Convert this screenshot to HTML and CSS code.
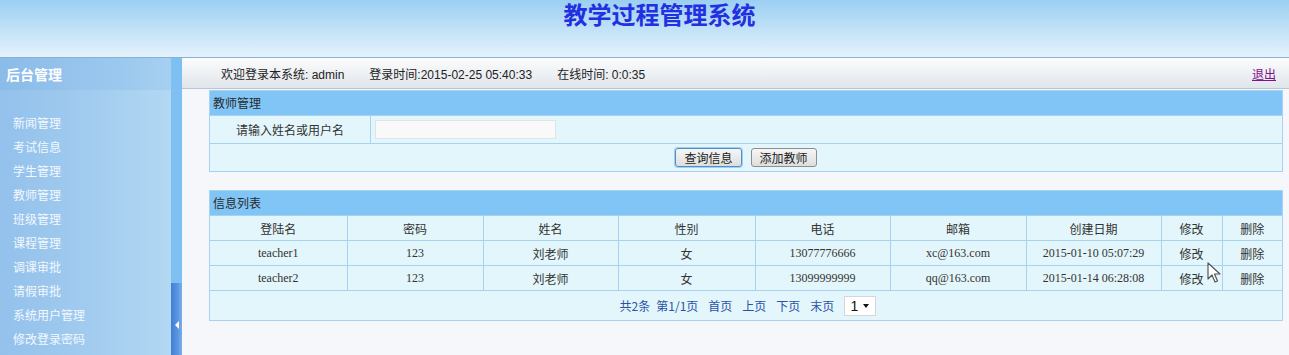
FILE: index.html
```html
<!DOCTYPE html>
<html>
<head>
  <meta charset="utf-8">
  <link rel="stylesheet" href="styles.css">
</head>
<body>
  <div class="header">
    <h1 class="title">教学过程管理系统</h1>
  </div>

  <div class="layout">
    <div class="sidebar">
      <div class="side-title">后台管理</div>
      <ul class="menu">
        <li>新闻管理</li>
        <li>考试信息</li>
        <li>学生管理</li>
        <li>教师管理</li>
        <li>班级管理</li>
        <li>课程管理</li>
        <li>调课审批</li>
        <li>请假审批</li>
        <li>系统用户管理</li>
        <li>修改登录密码</li>
      </ul>
    </div>

    <div class="splitter">
      <div class="split-top"></div>
      <div class="split-handle"><span class="arrow"></span></div>
    </div>

    <div class="main">
      <div class="topbar">
        <span class="info">欢迎登录本系统: admin</span>
        <span class="info">登录时间:2015-02-25 05:40:33</span>
        <span class="info">在线时间: 0:0:35</span>
        <a class="logout" href="#">退出</a>
      </div>

      <div class="content">
        <div class="panel">
          <div class="panel-head">教师管理</div>
          <div class="form-row">
            <div class="form-label">请输入姓名或用户名</div>
            <div class="form-field"><input class="text-input" type="text"></div>
          </div>
          <div class="form-row buttons">
            <button class="btn btn-focus">查询信息</button>
            <button class="btn">添加教师</button>
          </div>
        </div>

        <div class="panel list-panel">
          <div class="panel-head">信息列表</div>
          <table class="grid">
            <colgroup>
              <col style="width:137px"><col style="width:136px"><col style="width:135px">
              <col style="width:137px"><col style="width:135px"><col style="width:136px">
              <col style="width:135px"><col style="width:61px"><col style="width:60px">
            </colgroup>
            <thead>
              <tr>
                <th>登陆名</th><th>密码</th><th>姓名</th><th>性别</th><th>电话</th>
                <th>邮箱</th><th>创建日期</th><th>修改</th><th>删除</th>
              </tr>
            </thead>
            <tbody>
              <tr>
                <td>teacher1</td><td>123</td><td class="cn">刘老师</td><td class="cn">女</td>
                <td>13077776666</td><td>xc@163.com</td><td>2015-01-10 05:07:29</td>
                <td class="cn">修改</td><td class="cn">删除</td>
              </tr>
              <tr>
                <td>teacher2</td><td>123</td><td class="cn">刘老师</td><td class="cn">女</td>
                <td>13099999999</td><td>qq@163.com</td><td>2015-01-14 06:28:08</td>
                <td class="cn">修改</td><td class="cn">删除</td>
              </tr>
            </tbody>
          </table>
          <div class="pager">
            <span>共2条</span>
            <span>第1/1页</span>
            <a href="#">首页</a>
            <a href="#">上页</a>
            <a href="#">下页</a>
            <a href="#">末页</a>
            <span class="page-select">1<span class="caret"></span></span>
          </div>
        </div>
      </div>
    </div>
  </div>

  <svg class="cursor" width="16" height="22" viewBox="0 0 16 22">
    <path d="M1 1 L1 17 L5 13 L8 20 L10.5 19 L7.5 12 L13 12 Z" fill="#fff" stroke="#555" stroke-width="1.2" stroke-linejoin="round"/>
  </svg>
</body>
</html>
```

FILE: styles.css
```css
body {
  margin: 0;
  padding: 0;
  width: 1289px;
  height: 355px;
  overflow: hidden;
  font-family: "Liberation Sans", "Noto Sans CJK SC", sans-serif;
  font-size: 12px;
  color: #333;
  background: #f6f7fa;
}

.header {
  height: 57px;
  border-bottom: 1px solid #86b2d6;
  background: linear-gradient(#9bcff2, #c4e3f8 55%, #e4f2fc);
}

.title {
  margin: 0;
  padding: 0 0 0 30px;
  text-align: center;
  font-family: "Noto Sans CJK SC", sans-serif;
  font-size: 24px;
  line-height: 28px;
  font-weight: bold;
  color: #2230e2;
}

.layout {
  display: flex;
  height: 297px;
}

.sidebar {
  width: 171px;
  background: linear-gradient(to right, #93c1ec, #a4cdef 60%, #b2d8f2);
}

.side-title {
  height: 32px;
  line-height: 32px;
  padding-left: 6px;
  font-family: "Noto Sans CJK SC", sans-serif;
  font-size: 14px;
  font-weight: bold;
  color: #fff;
  background: linear-gradient(to right, #8bbbe8, #9bc8ee 70%, #a6d0f0);
}

.menu {
  list-style: none;
  margin: 0;
  padding: 21px 0 0 13px;
}

.menu li {
  height: 24px;
  line-height: 24px;
  font-family: "Noto Sans CJK SC", sans-serif;
  font-size: 12px;
  color: #f2f8fd;
}

.splitter {
  width: 11px;
  display: flex;
  flex-direction: column;
}

.split-top {
  flex: 1;
  background: #7fc0f2;
}

.split-handle {
  height: 72px;
  background: linear-gradient(to right, #3f7ed6, #5b95e0 60%, #7aaee8);
  display: flex;
  justify-content: center;
  padding-top: 38px;
  box-sizing: border-box;
}

.arrow {
  width: 0;
  height: 0;
  border-top: 4px solid transparent;
  border-bottom: 4px solid transparent;
  border-right: 4px solid #fff;
}

.main {
  flex: 1;
  background: #f6f7fa;
}

.topbar {
  display: flex;
  align-items: center;
  height: 30px;
  padding: 0 13px 0 39px;
  border-top-left-radius: 6px;
  border-bottom: 1px solid #b9c7d4;
  background: linear-gradient(#fbfcfd, #eef1f4 50%, #dfe5eb);
}

.info {
  margin-right: 25px;
  color: #222;
}

.logout {
  margin-left: auto;
  color: #82108a;
  font-family: "Noto Sans CJK SC", sans-serif;
}

.content {
  padding: 1px 6px 0 27px;
}

.panel {
  border: 1px solid #a6d3f2;
  background: #e3f6fb;
}

.panel-head {
  height: 24px;
  line-height: 24px;
  padding-left: 3px;
  background: #80c5f6;
  color: #2a2a2a;
  font-family: "Noto Sans CJK SC", sans-serif;
}

.form-row {
  display: flex;
  height: 27px;
  border-top: 1px solid #a6d3f2;
}

.form-label {
  width: 160px;
  border-right: 1px solid #a6d3f2;
  text-align: center;
  line-height: 27px;
  font-family: "Noto Sans CJK SC", sans-serif;
}

.form-field {
  display: flex;
  align-items: center;
  padding-left: 4px;
}

.text-input {
  width: 181px;
  height: 19px;
  box-sizing: border-box;
  border: 1px solid #e0e4e8;
  background: #f9f9f9;
}

.buttons {
  justify-content: center;
  align-items: center;
  gap: 9px;
}

.btn {
  height: 19px;
  padding: 0 8px;
  font-family: "Noto Sans CJK SC", sans-serif;
  font-size: 12px;
  line-height: 15px;
  color: #222;
  border: 1px solid #8e8e8e;
  border-radius: 3px;
  background: linear-gradient(#f6f6f6, #dedede);
}

.btn-focus {
  border-color: #4d90cf;
  box-shadow: 0 0 0 1px #a7cdee;
}

.list-panel {
  margin-top: 18px;
}

.grid {
  width: 100%;
  table-layout: fixed;
  border-collapse: collapse;
}

.grid th,
.grid td {
  height: 24px;
  border: 1px solid #a6d3f2;
  text-align: center;
  padding: 0;
}

.grid tr > :first-child {
  border-left: 0;
}

.grid tr > :last-child {
  border-right: 0;
}

.grid th {
  font-weight: normal;
  font-family: "Noto Sans CJK SC", sans-serif;
  color: #333;
}

.grid td {
  font-family: "Liberation Serif", "Noto Sans CJK SC", serif;
  color: #333;
}

.grid td.cn {
  font-family: "Noto Sans CJK SC", sans-serif;
}

.pager {
  height: 29px;
  display: flex;
  justify-content: center;
  align-items: center;
  gap: 10px;
  padding-left: 4px;
  color: #2b52a6;
  font-family: "Noto Sans CJK SC", sans-serif;
}

.pager span:first-child {
  margin-right: -4px;
}

.pager a {
  color: #2b52a6;
  text-decoration: none;
}

.page-select {
  display: flex;
  align-items: center;
  gap: 5px;
  width: 32px;
  height: 20px;
  box-sizing: border-box;
  padding-left: 5px;
  border: 1px solid #d6d6d6;
  background: #fff;
  color: #111;
  font-family: "Liberation Sans", sans-serif;
  font-size: 14px;
}

.caret {
  width: 0;
  height: 0;
  border-left: 3px solid transparent;
  border-right: 3px solid transparent;
  border-top: 4px solid #111;
}

.cursor {
  position: absolute;
  left: 1207px;
  top: 262px;
}
```
